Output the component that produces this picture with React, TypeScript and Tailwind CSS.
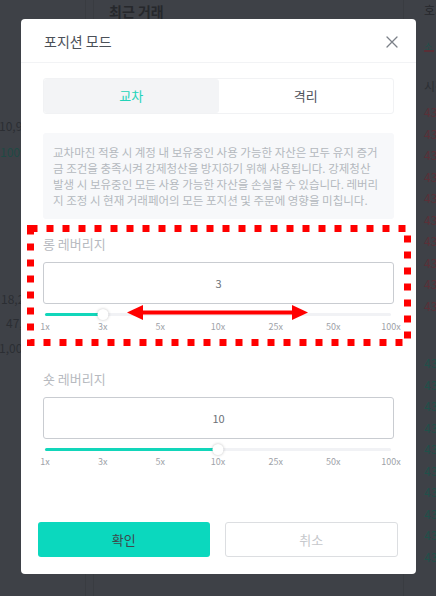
import React from "react";

const FONT = { fontFamily: '"Noto Sans CJK KR", "Noto Sans", sans-serif' };

const marks = ["1x", "3x", "5x", "10x", "25x", "50x", "100x"];

const LeverageBlock: React.FC<{ label: string; value: string; step: number; top: string }> = ({
  label,
  value,
  step,
  top,
}) => {
  const pct = (step / (marks.length - 1)) * 100;
  return (
    <div className={top}>
      <div className="text-[13px] leading-[18px] text-[#b7bac0]">{label}</div>
      <div className="mt-[9px] flex h-[42px] items-center justify-center rounded-[3px] border border-[#c9ccd1] text-[11px] text-[#6d7278]">
        {value}
      </div>
      <div className="relative ml-[2px] mr-[3px] mt-[5px] h-[11px]">
        <div className="absolute left-0 right-0 top-[4px] h-[3px] rounded-full bg-[#f1f2f5]" />
        <div
          className="absolute left-0 top-[4px] h-[3px] rounded-full bg-[#12d6ba]"
          style={{ width: `${pct}%` }}
        />
        <div
          className="absolute top-0 h-[11px] w-[11px] -translate-x-1/2 rounded-full bg-white shadow-[0_0_3px_rgba(0,0,0,0.25)]"
          style={{ left: `${pct}%` }}
        />
      </div>
      <div className="relative ml-[2px] mr-[3px] h-[13px]">
        {marks.map((m, i) => (
          <span
            key={m}
            className="absolute top-0 -translate-x-1/2 text-[9px] leading-[13px] text-[#9ea2a8]"
            style={{ left: `${(i / (marks.length - 1)) * 100}%` }}
          >
            {m}
          </span>
        ))}
      </div>
    </div>
  );
};

const App: React.FC = () => {
  const reds = Array.from({ length: 10 });
  const greens = Array.from({ length: 10 });
  return (
    <div className="relative h-[596px] w-[436px] overflow-hidden bg-[#3e4147]" style={FONT}>
      {/* page behind the dialog */}
      <div className="flex h-full">
        <div className="w-[86px] whitespace-nowrap border-r border-[#393c41] pt-[117px] text-[12px] text-[#2b2e33]">
          <div className="-ml-[1px] leading-[18px]">10,925.5</div>
          <div className="mt-[8px] leading-[18px] text-[#1f4a45]">100%</div>
          <div className="ml-[1px] mt-[129px] leading-[18px]">18,27</div>
          <div className="ml-[6px] mt-[6px] leading-[18px]">47,32</div>
          <div className="-ml-[1px] mt-[7px] leading-[18px]">1,000</div>
        </div>
        <div className="w-[8px] border-r border-[#393c41]" />
        <div className="flex-1 pl-[15px]">
          <div className="text-[14px] font-bold leading-[22px] text-[#26282c]">최근 거래</div>
        </div>
        <div className="w-[33px] whitespace-nowrap border-l border-[#393c41] pl-[20px] text-[12px]">
          <div className="leading-[20px] text-[#26282c]">호가</div>
          <div className="mt-[22px] h-[10px] w-[10px] border-b-2 border-[#5a2f37] text-[9px] leading-[10px] text-[#22504a]">
            소
          </div>
          <div className="mt-[26px] leading-[16px] text-[#2b2e33]">시간</div>
          <div className="mt-[7px]">
            {reds.map((_, i) => (
              <div key={i} className="leading-[21.5px] text-[#5b3038]">
                43
              </div>
            ))}
          </div>
          <div className="mt-[36px]">
            {greens.map((_, i) => (
              <div key={i} className="leading-[21.5px] text-[#21504a]">
                43
              </div>
            ))}
          </div>
        </div>
      </div>

      {/* dialog */}
      <div className="absolute left-[21px] top-[19px] flex h-[555px] w-[395px] flex-col rounded-[4px] bg-white">
        <div className="flex h-[44px] items-center justify-between border-b border-[#f2f3f5] pl-[23px] pr-[18px] pt-[2px]">
          <span className="text-[14px] text-[#4b5058]">포지션 모드</span>
          <svg width="12" height="12" viewBox="0 0 12 12">
            <path d="M1 1L11 11M11 1L1 11" stroke="#7b8088" strokeWidth="1.3" strokeLinecap="round" />
          </svg>
        </div>

        <div className="px-[22px]">
          <div className="mt-[15px] flex h-[36px] rounded-[3px] border border-[#f1f2f4] text-[13px]">
            <div className="flex flex-1 items-center justify-center rounded-[3px] bg-[#f3f4f6] text-[#23d3b8]">
              교차
            </div>
            <div className="flex flex-1 items-center justify-center text-[#4f545b]">격리</div>
          </div>

          <div className="mt-[19px] rounded-[3px] bg-[#f7f8fa] py-[11px] pl-[10px] pr-[14px] text-[11.5px] leading-[16px] text-[#b4b8be]">
            교차마진 적용 시 계정 내 보유중인 사용 가능한 자산은 모두 유지 증거금 조건을 충족시켜 강제청산을 방지하기 위해 사용됩니다. 강제청산 발생 시 보유중인 모든 사용 가능한 자산을 손실할 수 있습니다. 레버리지 조정 시 현재 거래페어의 모든 포지션 및 주문에 영향을 미칩니다.
          </div>

          <LeverageBlock label="롱 레버리지" value="3" step={1} top="mt-[16px]" />
          <LeverageBlock label="숏 레버리지" value="10" step={3} top="mt-[37px]" />
        </div>

        <div className="mt-auto flex gap-[15px] pb-[17px] pl-[17px] pr-[18px]">
          <button className="h-[35px] flex-1 rounded-[3px] bg-[#0bd8be] text-[13px] text-[#3d494c]">
            확인
          </button>
          <button className="h-[35px] flex-1 rounded-[3px] border border-[#dcdee1] bg-white text-[13px] text-[#c6c8cc]">
            취소
          </button>
        </div>
      </div>

      {/* red annotation */}
      <svg className="pointer-events-none absolute left-0 top-0" width="436" height="596" viewBox="0 0 436 596">
        <rect
          x="30.5"
          y="228.5"
          width="377"
          height="114"
          fill="none"
          stroke="#ff0000"
          strokeWidth="7"
          strokeDasharray="7 9"
        />
        <rect x="141" y="310.5" width="153" height="4" fill="#ff0000" />
        <polygon points="127,312.5 143,305 143,320" fill="#ff0000" />
        <polygon points="308,312.5 292,305 292,320" fill="#ff0000" />
      </svg>
    </div>
  );
};

export default App;
